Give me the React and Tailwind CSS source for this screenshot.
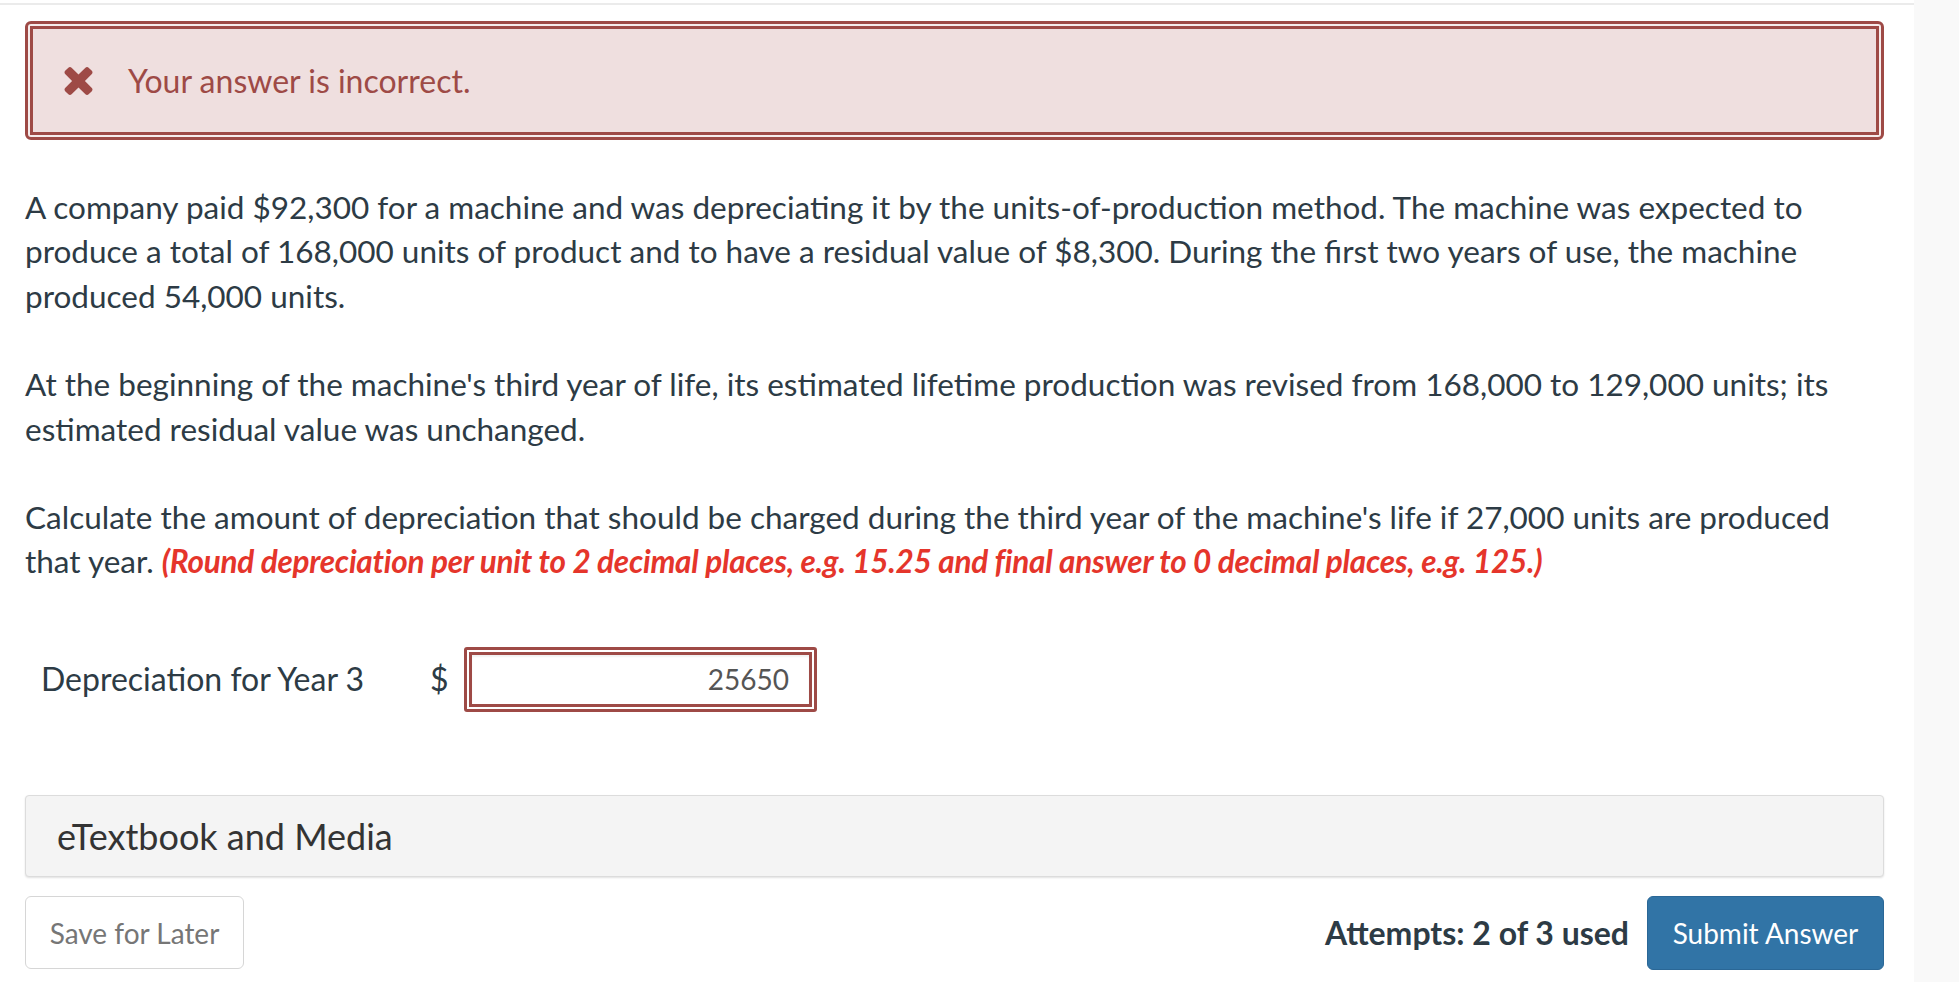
import React from 'react';

const TEXT = 'text-[#2d3b45]';

function TimesIcon() {
  return (
    <svg viewBox="110 366 1188 1188" className="h-[28px] w-[29px] fill-[#9e4a46]">
      <path d="M1298 1322q0 40-28 68l-136 136q-28 28-68 28t-68-28l-294-294-294 294q-28 28-68 28t-68-28l-136-136q-28-28-28-68t28-68l294-294-294-294q-28-28-28-68t28-68l136-136q28-28 68-28t68 28l294 294 294-294q28-28 68-28t68 28l136 136q28 28 28 68t-28 68l-294 294 294 294q28 28 28 68z" />
    </svg>
  );
}

function App() {
  return (
    <div className="flex min-h-screen w-full bg-white font-['Lato',sans-serif]">
      <div className="w-[1914px] shrink-0 pt-[3px]">
        <div className="border-t-2 border-[#ebebeb] pl-[25px] pr-[30px] pt-[16px] pb-[13px]">
          {/* feedback banner */}
          <div className="rounded-[6px] border-[3px] border-[#9e4a46] bg-[#f6ecec] p-[2px]">
            <div className="flex h-[109px] items-center border-[3px] border-[#9e4a46] bg-[#efdfdf] pl-[31px]">
              <TimesIcon />
              <span className="ml-[35px] text-[32px] text-[#9e4a46]">Your answer is incorrect.</span>
            </div>
          </div>

          {/* question */}
          <div className={`${TEXT} text-[31.5px] leading-[44.4px]`}>
            <p className="mt-[45px]">
              A company paid $92,300 for a machine and was depreciating it by the units-of-production method. The machine was expected to produce a total of 168,000 units of product and to have a residual value of $8,300. During the first two years of use, the machine produced 54,000 units.
            </p>
            <p className="mt-[44px]">
              At the beginning of the machine's third year of life, its estimated lifetime production was revised from 168,000 to 129,000 units; its estimated residual value was unchanged.
            </p>
            <p className="mt-[44px]">
              Calculate the amount of depreciation that should be charged during the third year of the machine's life if 27,000 units are produced that year.{' '}
              <span className="font-bold italic tracking-[-0.25px] text-[#e5352b]">
                (Round depreciation per unit to 2 decimal places, e.g. 15.25 and final answer to 0 decimal places, e.g. 125.)
              </span>
            </p>
          </div>

          {/* answer row */}
          <div className={`mt-[63px] flex h-[65px] items-center ${TEXT}`}>
            <div className="w-[405px] pl-[16px] text-[32px]">Depreciation for Year 3</div>
            <div className="w-[34px] text-[32px]">$</div>
            <div className="h-[65px] w-[353px] rounded-[3px] border-[3px] border-[#9e4a46] bg-white p-[2px]">
              <div className="flex h-full items-center justify-end border-[3px] border-[#9e4a46] pr-[20px] text-[28px] text-[#555] shadow-[inset_0_2px_2px_rgba(0,0,0,0.06)]">
                25650
              </div>
            </div>
          </div>

          {/* eTextbook panel */}
          <div className="mt-[83px] flex h-[82px] items-center rounded-[4px] border border-[#dcdcdc] bg-[#f4f4f4] pl-[31px] shadow-[0_1px_2px_rgba(0,0,0,0.12)]">
            <span className="text-[36px] text-[#333]">eTextbook and Media</span>
          </div>

          {/* actions */}
          <div className="mt-[19px] flex items-center justify-between">
            <button className="h-[73px] w-[219px] rounded-[6px] border border-[#d6d6d6] bg-white text-[28px] text-[#767676]">
              Save for Later
            </button>
            <div className="flex items-center">
              <span className={`text-[32px] font-bold ${TEXT}`}>Attempts: 2 of 3 used</span>
              <button className="ml-[18px] h-[74px] w-[237px] rounded-[6px] border border-[#2a6796] bg-[#3174a6] text-[28px] text-white">
                Submit Answer
              </button>
            </div>
          </div>
        </div>
      </div>
      <div className="flex-1 bg-[#f9f9f9]" />
    </div>
  );
}

export default App;
